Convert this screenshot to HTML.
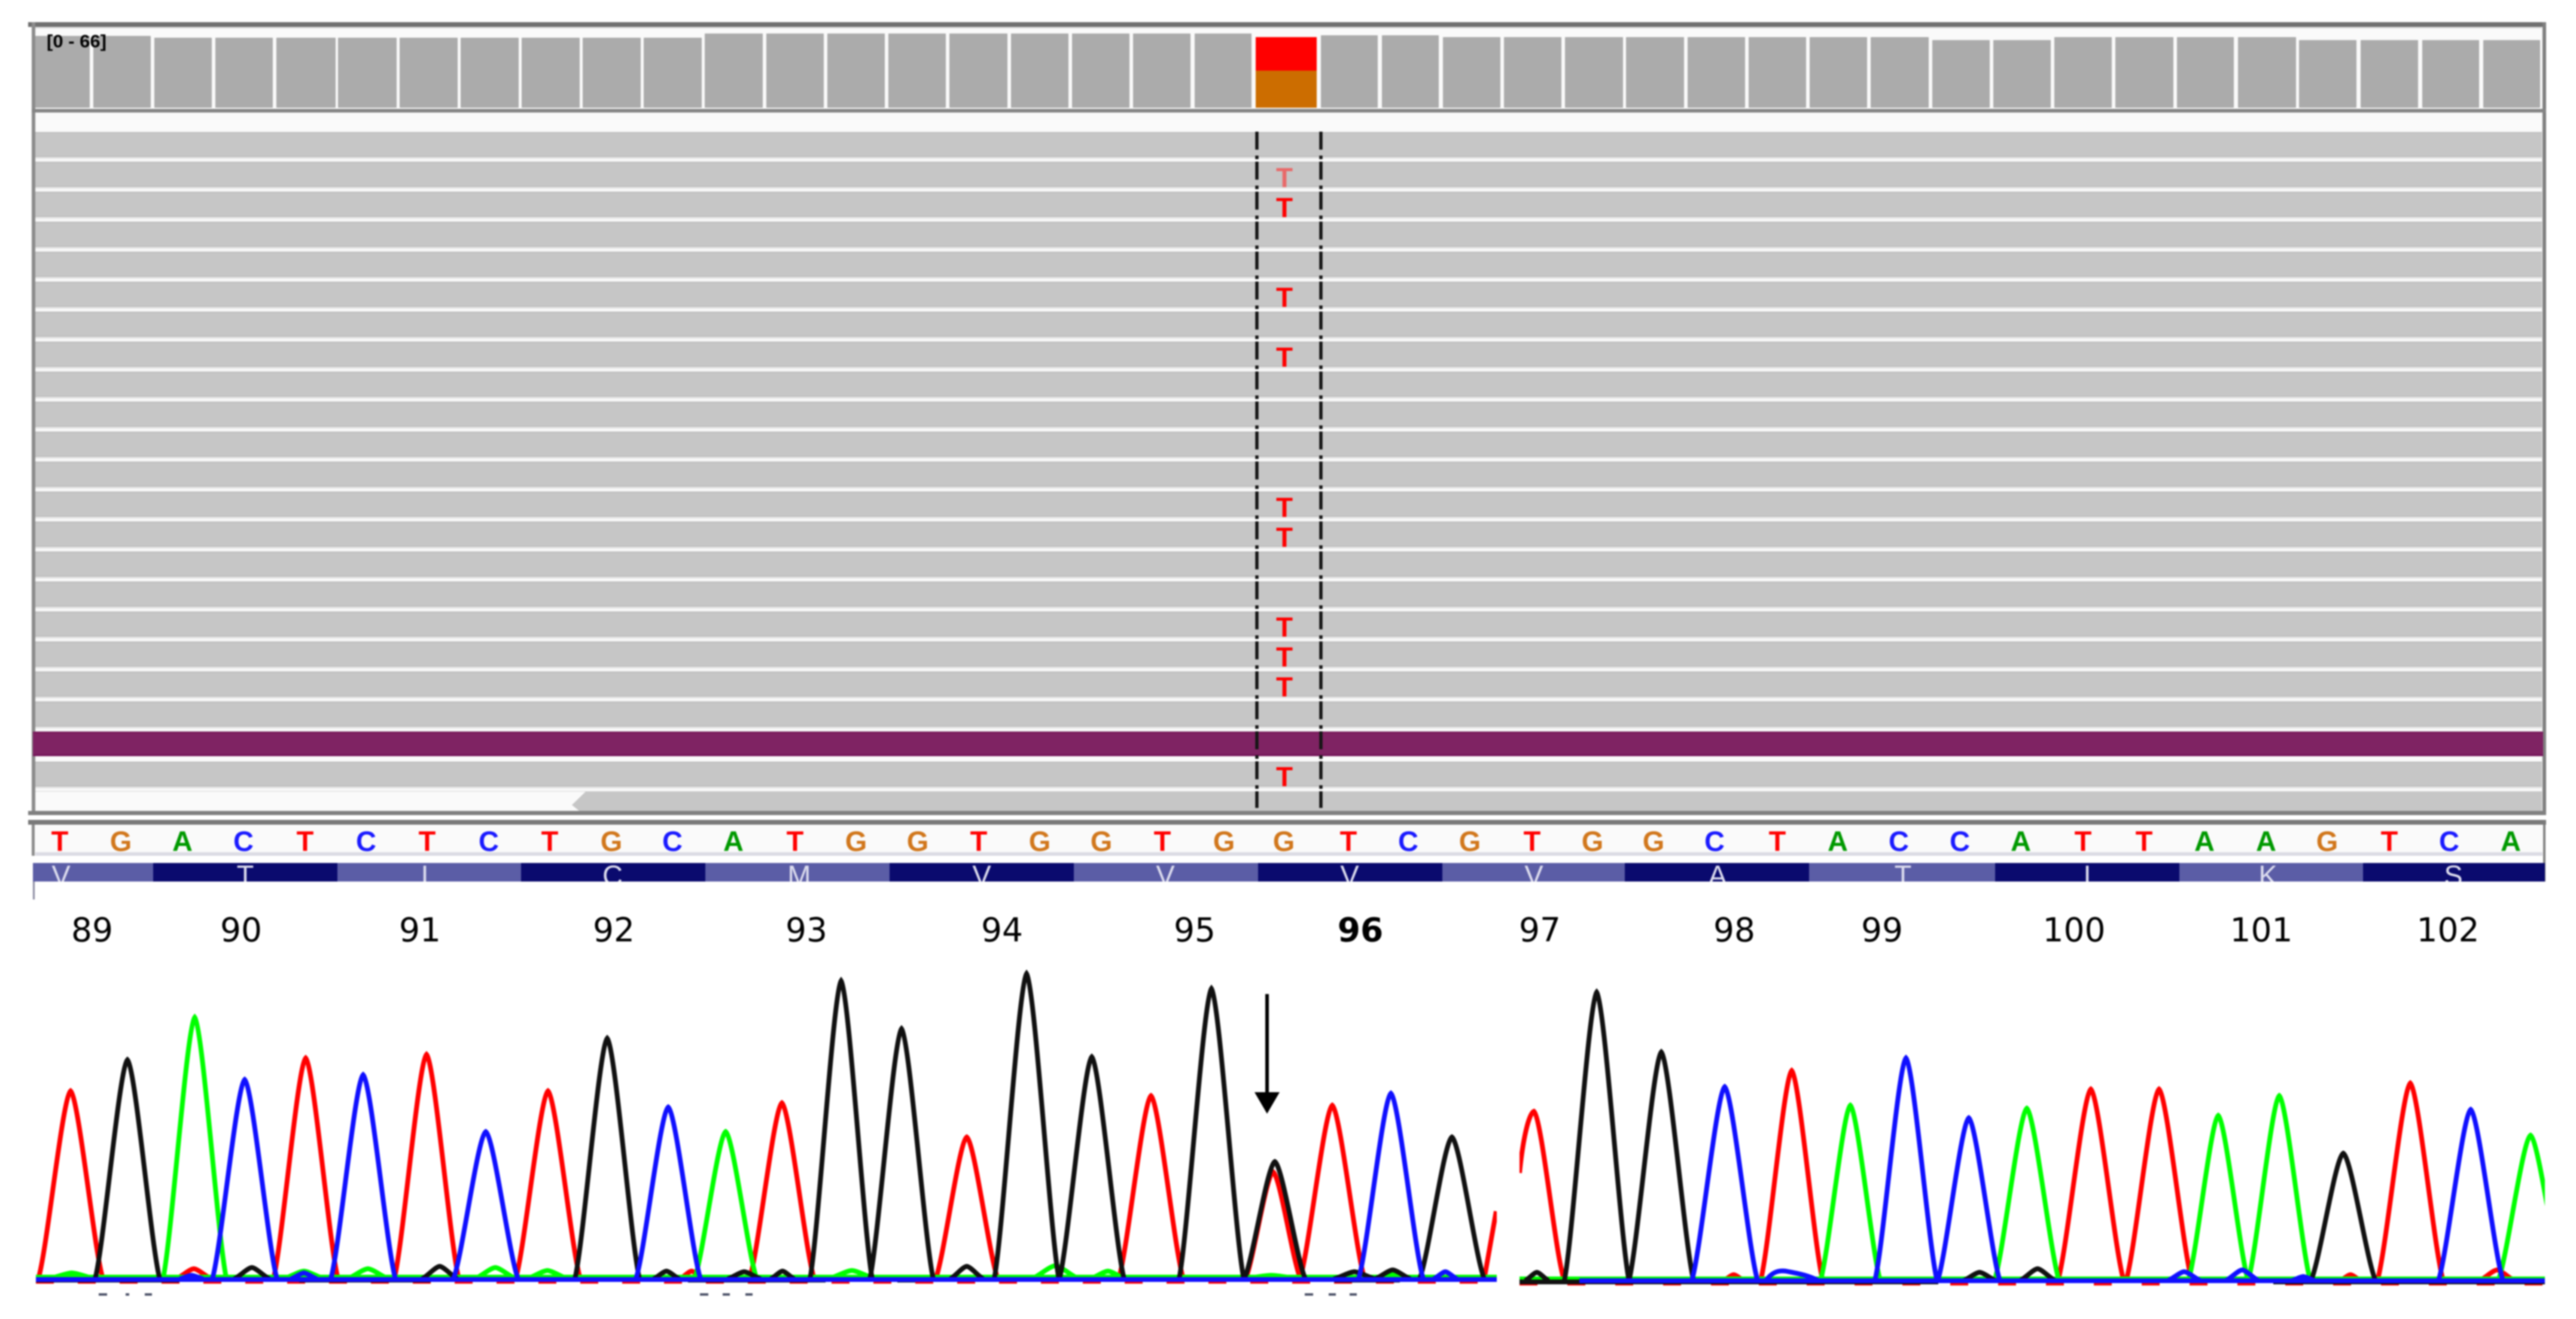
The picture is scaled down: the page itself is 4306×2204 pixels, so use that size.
<!DOCTYPE html>
<html>
<head>
<meta charset="utf-8">
<title>IGV and chromatogram</title>
<style>
html,body{margin:0;padding:0;background:#fff;width:4306px;height:2204px;overflow:hidden}
svg{display:block;filter:blur(1.2px)}
.seq{font-family:"Liberation Sans",sans-serif;font-weight:bold;font-size:47px;text-anchor:middle}
.aa{font-family:"Liberation Sans",sans-serif;font-size:47px;text-anchor:middle;fill:#dcdcee}
.num{font-family:"DejaVu Sans",sans-serif;font-size:55px;text-anchor:middle;fill:#000}
.mt{font-family:"Liberation Sans",sans-serif;font-weight:bold;font-size:46px;text-anchor:middle;fill:#ff0000}
</style>
</head>
<body>
<svg xmlns="http://www.w3.org/2000/svg" width="4306" height="2204" viewBox="0 0 4306 2204">
<defs>
<path id="p" d="M-1 0C-.72 .16 -.26 .96 0 1C.26 .96 .72 .16 1 0" fill="none" vector-effect="non-scaling-stroke"/>
<g id="r">
<rect x="59" y="0" width="4190" height="42" fill="#c6c6c6"/>
<rect x="59" y="0" width="4190" height="2" fill="#bfbfbf"/>
<rect x="59" y="40" width="4190" height="2" fill="#bfbfbf"/>
<rect x="59" y="42" width="4190" height="3" fill="#e6e6e6"/>
<rect x="59" y="49" width="4190" height="1.5" fill="#e0e0e0"/>
</g>
<clipPath id="aac"><rect x="55" y="1442" width="4200" height="31"/></clipPath>
<clipPath id="cl"><rect x="60" y="1600" width="2442" height="560"/></clipPath>
<clipPath id="cr"><rect x="2540" y="1600" width="1714" height="560"/></clipPath>
</defs>

<!-- coverage panel -->
<rect x="53" y="37" width="4203" height="1325" fill="#fafafa"/>
<rect x="47" y="37" width="4209" height="8" fill="#707070"/>
<rect x="59" y="45" width="4190" height="3" fill="#e2e2e2"/>
<rect x="53" y="37" width="6" height="1325" fill="#8c8c8c"/>
<rect x="4250" y="37" width="6" height="1325" fill="#808080"/>

<g fill="#ababab">
<rect x="59" y="60" width="91" height="120"/>
<rect x="156" y="60" width="96" height="120"/>
<rect x="258" y="63" width="96" height="117"/>
<rect x="360" y="63" width="96" height="117"/>
<rect x="462" y="63" width="99" height="117"/>
<rect x="565" y="63" width="98" height="117"/>
<rect x="668" y="63" width="97" height="117"/>
<rect x="770" y="63" width="97" height="117"/>
<rect x="872" y="63" width="97" height="117"/>
<rect x="974" y="63" width="97" height="117"/>
<rect x="1076" y="63" width="97" height="117"/>
<rect x="1178" y="56" width="97" height="124"/>
<rect x="1281" y="56" width="96" height="124"/>
<rect x="1383" y="56" width="96" height="124"/>
<rect x="1485" y="56" width="96" height="124"/>
<rect x="1587" y="56" width="97" height="124"/>
<rect x="1690" y="56" width="96" height="124"/>
<rect x="1792" y="56" width="96" height="124"/>
<rect x="1894" y="56" width="96" height="124"/>
<rect x="1997" y="56" width="95" height="124"/>
<rect x="2208" y="59" width="95" height="121"/>
<rect x="2310" y="59" width="95" height="121"/>
<rect x="2412" y="62" width="96" height="118"/>
<rect x="2514" y="62" width="96" height="118"/>
<rect x="2616" y="62" width="97" height="118"/>
<rect x="2718" y="62" width="97" height="118"/>
<rect x="2821" y="62" width="96" height="118"/>
<rect x="2923" y="62" width="96" height="118"/>
<rect x="3025" y="62" width="96" height="118"/>
<rect x="3127" y="62" width="97" height="118"/>
<rect x="3230" y="67" width="96" height="113"/>
<rect x="3332" y="67" width="96" height="113"/>
<rect x="3434" y="62" width="96" height="118"/>
<rect x="3536" y="62" width="97" height="118"/>
<rect x="3639" y="62" width="95" height="118"/>
<rect x="3741" y="62" width="97" height="118"/>
<rect x="3843" y="67" width="96" height="113"/>
<rect x="3946" y="67" width="96" height="113"/>
<rect x="4049" y="67" width="95" height="113"/>
<rect x="4151" y="67" width="95" height="113"/>
</g>
<rect x="2099" y="62" width="102" height="56" fill="#ff0000"/>
<rect x="2099" y="118" width="102" height="62" fill="#cc6d00"/>
<text x="78" y="79" font-family="'Liberation Sans',sans-serif" font-weight="bold" font-size="30" textLength="100" lengthAdjust="spacingAndGlyphs" fill="#000">[0 - 66]</text>
<rect x="53" y="182" width="4203" height="6" fill="#858585"/>

<!-- reads -->
<use href="#r" y="220.5"/><use href="#r" y="270.6"/><use href="#r" y="320.7"/><use href="#r" y="370.8"/>
<use href="#r" y="420.9"/><use href="#r" y="471"/><use href="#r" y="521.1"/><use href="#r" y="571.2"/>
<use href="#r" y="621.3"/><use href="#r" y="671.4"/><use href="#r" y="721.5"/><use href="#r" y="771.6"/>
<use href="#r" y="821.7"/><use href="#r" y="871.8"/><use href="#r" y="921.9"/><use href="#r" y="972"/>
<use href="#r" y="1022.1"/><use href="#r" y="1072.2"/><use href="#r" y="1122.3"/><use href="#r" y="1172.4"/>
<use href="#r" y="1272.6"/>
<rect x="55" y="1222.5" width="4196" height="41" fill="#7f2363"/>
<rect x="55" y="1222.5" width="4196" height="3" fill="#7a1a5c"/>
<rect x="55" y="1260.5" width="4196" height="3" fill="#75155a"/>
<polygon points="979,1322.7 4249,1322.7 4249,1355 968,1355 956,1345" fill="#c6c6c6"/>

<rect x="47" y="1355" width="4209" height="7" fill="#808080"/>

<path d="M2101 220V1350M2208 220V1350" stroke="#151515" stroke-width="5.5" stroke-dasharray="30 10 6 4.1" fill="none"/>

<text class="mt" x="2147" y="313" style="fill:#e96a6a">T</text>
<text class="mt" x="2147" y="363">T</text>
<text class="mt" x="2147" y="513">T</text>
<text class="mt" x="2147" y="613">T</text>
<text class="mt" x="2147" y="864">T</text>
<text class="mt" x="2147" y="914">T</text>
<text class="mt" x="2147" y="1064">T</text>
<text class="mt" x="2147" y="1114">T</text>
<text class="mt" x="2147" y="1164">T</text>
<text class="mt" x="2147" y="1314">T</text>

<!-- sequence -->
<rect x="47" y="1370" width="4209" height="8" fill="#7a7a7a"/>
<rect x="59" y="1378" width="4191" height="46" fill="#fafafa"/>
<rect x="59" y="1424" width="4191" height="6" fill="#dcdce4"/>
<rect x="53" y="1378" width="5" height="52" fill="#8c8c8c"/>
<rect x="4251" y="1378" width="4" height="95" fill="#808080"/>
<rect x="55" y="1473" width="3" height="30" fill="#8a8aa0"/>
<g class="seq">
<text x="100" y="1422" fill="#ff0000">T</text>
<text x="202" y="1422" fill="#d1771c">G</text>
<text x="305" y="1422" fill="#009900">A</text>
<text x="407" y="1422" fill="#1a1aff">C</text>
<text x="510" y="1422" fill="#ff0000">T</text>
<text x="612" y="1422" fill="#1a1aff">C</text>
<text x="714" y="1422" fill="#ff0000">T</text>
<text x="817" y="1422" fill="#1a1aff">C</text>
<text x="919" y="1422" fill="#ff0000">T</text>
<text x="1022" y="1422" fill="#d1771c">G</text>
<text x="1124" y="1422" fill="#1a1aff">C</text>
<text x="1226" y="1422" fill="#009900">A</text>
<text x="1329" y="1422" fill="#ff0000">T</text>
<text x="1431" y="1422" fill="#d1771c">G</text>
<text x="1534" y="1422" fill="#d1771c">G</text>
<text x="1636" y="1422" fill="#ff0000">T</text>
<text x="1738" y="1422" fill="#d1771c">G</text>
<text x="1841" y="1422" fill="#d1771c">G</text>
<text x="1943" y="1422" fill="#ff0000">T</text>
<text x="2046" y="1422" fill="#d1771c">G</text>
<text x="2146" y="1422" fill="#d1771c">G</text>
<text x="2254" y="1422" fill="#ff0000">T</text>
<text x="2354" y="1422" fill="#1a1aff">C</text>
<text x="2457" y="1422" fill="#d1771c">G</text>
<text x="2561" y="1422" fill="#ff0000">T</text>
<text x="2662" y="1422" fill="#d1771c">G</text>
<text x="2764" y="1422" fill="#d1771c">G</text>
<text x="2866" y="1422" fill="#1a1aff">C</text>
<text x="2971" y="1422" fill="#ff0000">T</text>
<text x="3072" y="1422" fill="#009900">A</text>
<text x="3174" y="1422" fill="#1a1aff">C</text>
<text x="3276" y="1422" fill="#1a1aff">C</text>
<text x="3378" y="1422" fill="#009900">A</text>
<text x="3482" y="1422" fill="#ff0000">T</text>
<text x="3584" y="1422" fill="#ff0000">T</text>
<text x="3685" y="1422" fill="#009900">A</text>
<text x="3788" y="1422" fill="#009900">A</text>
<text x="3890" y="1422" fill="#d1771c">G</text>
<text x="3994" y="1422" fill="#ff0000">T</text>
<text x="4094" y="1422" fill="#1a1aff">C</text>
<text x="4197" y="1422" fill="#009900">A</text>
</g>

<!-- amino acids -->
<rect x="55" y="1442" width="201" height="31" fill="#5b5da6"/>
<rect x="256" y="1442" width="308" height="31" fill="#0a0a6e"/>
<rect x="564" y="1442" width="307" height="31" fill="#5b5da6"/>
<rect x="871" y="1442" width="308" height="31" fill="#0a0a6e"/>
<rect x="1179" y="1442" width="308" height="31" fill="#5b5da6"/>
<rect x="1487" y="1442" width="308" height="31" fill="#0a0a6e"/>
<rect x="1795" y="1442" width="308" height="31" fill="#5b5da6"/>
<rect x="2103" y="1442" width="308" height="31" fill="#0a0a6e"/>
<rect x="2411" y="1442" width="305" height="31" fill="#5b5da6"/>
<rect x="2716" y="1442" width="308" height="31" fill="#0a0a6e"/>
<rect x="3024" y="1442" width="311" height="31" fill="#5b5da6"/>
<rect x="3335" y="1442" width="308" height="31" fill="#0a0a6e"/>
<rect x="3643" y="1442" width="307" height="31" fill="#5b5da6"/>
<rect x="3950" y="1442" width="304" height="31" fill="#0a0a6e"/>
<g clip-path="url(#aac)">
<text class="aa" x="102" y="1479">V</text>
<text class="aa" x="410" y="1479">T</text>
<text class="aa" x="710" y="1479">I</text>
<text class="aa" x="1024" y="1479">C</text>
<text class="aa" x="1336" y="1479">M</text>
<text class="aa" x="1641" y="1479">V</text>
<text class="aa" x="1948" y="1479">V</text>
<text class="aa" x="2256" y="1479">V</text>
<text class="aa" x="2564" y="1479">V</text>
<text class="aa" x="2871" y="1479">A</text>
<text class="aa" x="3181" y="1479">T</text>
<text class="aa" x="3489" y="1479">I</text>
<text class="aa" x="3791" y="1479">K</text>
<text class="aa" x="4101" y="1479">S</text>
</g>

<!-- codon numbers -->
<text class="num" x="154" y="1573">89</text>
<text class="num" x="403" y="1573">90</text>
<text class="num" x="702" y="1573">91</text>
<text class="num" x="1026" y="1573">92</text>
<text class="num" x="1348" y="1573">93</text>
<text class="num" x="1675" y="1573">94</text>
<text class="num" x="1997" y="1573">95</text>
<text class="num" x="2274" y="1573" font-weight="bold">96</text>
<text class="num" x="2574" y="1573">97</text>
<text class="num" x="2899" y="1573">98</text>
<text class="num" x="3146" y="1573">99</text>
<text class="num" x="3467" y="1573">100</text>
<text class="num" x="3780" y="1573">101</text>
<text class="num" x="4092" y="1573">102</text>

<!-- chromatogram, left section -->
<g clip-path="url(#cl)" stroke-width="8" fill="none">
<g stroke="#ff0000">
<path d="M60 2141H2502" stroke-dasharray="30 40"/>
<use href="#p" transform="translate(118,2137) scale(54,-314)"/>
<use href="#p" transform="translate(511,2137) scale(54,-369)"/>
<use href="#p" transform="translate(713,2137) scale(54,-375)"/>
<use href="#p" transform="translate(916,2137) scale(54,-314)"/>
<use href="#p" transform="translate(1307,2137) scale(54,-294)"/>
<use href="#p" transform="translate(1616,2137) scale(52,-237)"/>
<use href="#p" transform="translate(1924,2137) scale(54,-306)"/>
<use href="#p" transform="translate(2128,2137) scale(46,-179)"/>
<use href="#p" transform="translate(2227,2137) scale(54,-290)"/>
<use href="#p" transform="translate(324,2137) scale(30,-17)"/>
<use href="#p" transform="translate(1156,2137) scale(20,-13)"/>
<path d="M2481 2137L2501 2024"/>
</g>
<g stroke="#00ff00">
<path d="M60 2134H2502"/>
<use href="#p" transform="translate(325.5,2137) scale(53,-437)"/>
<use href="#p" transform="translate(1213,2137) scale(52,-246)"/>
<use href="#p" transform="translate(120,2137) scale(40,-10)"/>
<use href="#p" transform="translate(508,2137) scale(35,-13)"/>
<use href="#p" transform="translate(615,2137) scale(35,-17)"/>
<use href="#p" transform="translate(828,2137) scale(35,-19)"/>
<use href="#p" transform="translate(915,2137) scale(35,-14)"/>
<use href="#p" transform="translate(1424,2137) scale(40,-14)"/>
<use href="#p" transform="translate(1764,2137) scale(40,-22)"/>
<use href="#p" transform="translate(1852,2137) scale(30,-13)"/>
<use href="#p" transform="translate(2125,2137) scale(50,-6)"/>
<use href="#p" transform="translate(2328,2137) scale(30,-10)"/>
</g>
<g stroke="#111111">
<path d="M60 2139H300M500 2139H720M1150 2139H1380M1500 2139H1530M2230 2139H2340"/>
<use href="#p" transform="translate(213,2137) scale(54,-366)"/>
<use href="#p" transform="translate(1015,2137) scale(54,-402)"/>
<use href="#p" transform="translate(1406,2137) scale(52,-498)"/>
<use href="#p" transform="translate(1507,2137) scale(53,-418)"/>
<use href="#p" transform="translate(1716,2137) scale(54,-510)"/>
<use href="#p" transform="translate(1825,2137) scale(54,-371)"/>
<use href="#p" transform="translate(2025,2137) scale(54,-485)"/>
<use href="#p" transform="translate(2131,2137) scale(51,-196)"/>
<use href="#p" transform="translate(2427,2137) scale(54,-237)"/>
<use href="#p" transform="translate(421,2137) scale(30,-19)"/>
<use href="#p" transform="translate(735,2137) scale(30,-21)"/>
<use href="#p" transform="translate(1114,2137) scale(22,-13)"/>
<use href="#p" transform="translate(1244,2137) scale(28,-12)"/>
<use href="#p" transform="translate(1308,2137) scale(20,-13)"/>
<use href="#p" transform="translate(1616,2137) scale(28,-21)"/>
<use href="#p" transform="translate(2264,2137) scale(35,-12)"/>
<use href="#p" transform="translate(2328,2137) scale(30,-15)"/>
</g>
<g stroke="#1010ff">
<path d="M60 2138H2502"/>
<use href="#p" transform="translate(409,2137) scale(54,-333)"/>
<use href="#p" transform="translate(607,2137) scale(54,-341)"/>
<use href="#p" transform="translate(812,2137) scale(54,-246)"/>
<use href="#p" transform="translate(1117,2137) scale(54,-287)"/>
<use href="#p" transform="translate(2325,2137) scale(54,-310)"/>
<use href="#p" transform="translate(508,2137) scale(22,-10)"/>
<use href="#p" transform="translate(2416,2137) scale(20,-12)"/>
<use href="#p" transform="translate(320,2137) scale(20,-6)"/>
</g>
</g>

<!-- chromatogram, right section -->
<g clip-path="url(#cr)" stroke-width="8" fill="none">
<g stroke="#ff0000">
<path d="M2540 2144H4254" stroke-dasharray="30 50"/>
<path d="M2540 1960C2546 1900 2556 1860 2564 1857C2578 1870 2600 2100 2615 2140"/>
<use href="#p" transform="translate(2995,2140) scale(52,-351)"/>
<use href="#p" transform="translate(3495,2140) scale(55,-320)"/>
<use href="#p" transform="translate(3609,2140) scale(55,-320)"/>
<use href="#p" transform="translate(4029,2140) scale(55,-330)"/>
<use href="#p" transform="translate(2898,2140) scale(18,-10)"/>
<use href="#p" transform="translate(3929,2140) scale(18,-10)"/>
<use href="#p" transform="translate(4174,2140) scale(30,-18)"/>
</g>
<g stroke="#00ff00">
<path d="M2540 2137H4254"/>
<use href="#p" transform="translate(3093,2140) scale(50,-293)"/>
<use href="#p" transform="translate(3388,2140) scale(54,-288)"/>
<use href="#p" transform="translate(3708,2140) scale(50,-276)"/>
<use href="#p" transform="translate(3810,2140) scale(52,-309)"/>
<use href="#p" transform="translate(4230,2140) scale(54,-243)"/>
</g>
<g stroke="#111111">
<path d="M2540 2142H3240M3800 2142H4254"/>
<use href="#p" transform="translate(2669,2140) scale(54,-482)"/>
<use href="#p" transform="translate(2777,2140) scale(54,-382)"/>
<use href="#p" transform="translate(3917,2140) scale(54,-213)"/>
<use href="#p" transform="translate(2569,2140) scale(20,-14)"/>
<use href="#p" transform="translate(3309,2140) scale(28,-14)"/>
<use href="#p" transform="translate(3406,2140) scale(30,-20)"/>
</g>
<g stroke="#1010ff">
<path d="M2640 2140H4254"/>
<use href="#p" transform="translate(2883,2140) scale(55,-324)"/>
<use href="#p" transform="translate(3186,2140) scale(52,-372)"/>
<use href="#p" transform="translate(3291,2140) scale(52,-272)"/>
<use href="#p" transform="translate(4130,2140) scale(54,-286)"/>
<path d="M2952 2140C2960 2128 2970 2122 2985 2124C3005 2128 3020 2130 3040 2140"/>
<use href="#p" transform="translate(3651,2140) scale(28,-15)"/>
<use href="#p" transform="translate(3748,2140) scale(28,-18)"/>
<use href="#p" transform="translate(3850,2140) scale(20,-7)"/>
</g>
</g>

<!-- arrow -->
<rect x="2115" y="1661" width="6" height="170" fill="#000"/>
<polygon points="2097,1825 2139,1825 2118,1861" fill="#000"/>

<!-- cut-off axis labels -->
<g fill="#4a5066">
<rect x="165" y="2161" width="14" height="4"/><rect x="210" y="2161" width="6" height="4"/><rect x="242" y="2161" width="12" height="4"/>
<rect x="1170" y="2161" width="14" height="4"/><rect x="1208" y="2161" width="12" height="4"/><rect x="1246" y="2161" width="12" height="4"/>
<rect x="2181" y="2161" width="14" height="4"/><rect x="2221" y="2161" width="12" height="4"/><rect x="2256" y="2161" width="12" height="4"/>
</g>
</svg>
</body>
</html>
